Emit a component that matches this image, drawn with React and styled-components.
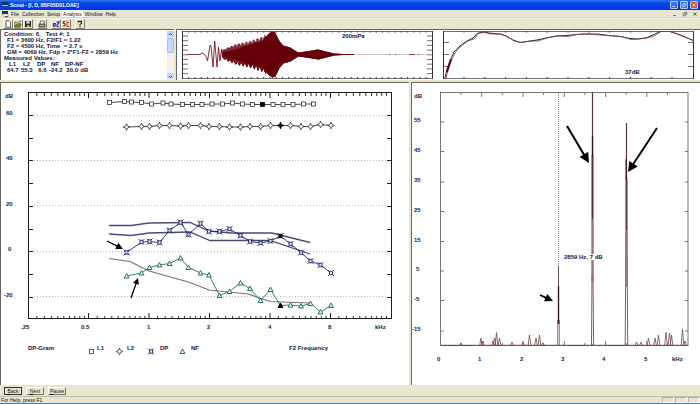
import React from "react";
import styled, { createGlobalStyle } from "styled-components";

const NAVY = "#16163e";
const MAROON = "#64000a";
const BEIGE = "#e8e5d0";
const DARK = "#66665f";

const GlobalStyle = createGlobalStyle`
  * { box-sizing: border-box; }
  body {
    margin: 0;
    background: ${BEIGE};
    font-family: "Liberation Sans", Arial, sans-serif;
    font-size: 5px;
    line-height: 6px;
    color: #111;
  }
  button { font: inherit; color: inherit; padding: 0; }
`;

const Window = styled.div`
  display: flex;
  flex-direction: column;
  min-height: 100vh;
  background: ${BEIGE};
`;

const TitleBar = styled.header`
  display: flex;
  align-items: center;
  gap: 1px;
  height: 10px;
  padding: 0 2px 0 1px;
  background: linear-gradient(#2c78ec, #0646e4 30%, #0438ea 80%, #0838c4);
  color: #fff;
`;

const Title = styled.h1`
  flex: 1;
  margin: 0;
  font-size: 5px;
  font-weight: bold;
`;

const Controls = styled.div`
  display: flex;
  gap: 2px;
`;

const ControlButton = styled.button`
  display: flex;
  align-items: center;
  justify-content: center;
  width: 8px;
  height: 8px;
  border: 1px solid ${(p) => (p.$plain ? "transparent" : "#b4c8f8")};
  border-radius: 1px;
  background: ${(p) => (p.$plain ? "transparent" : p.$danger ? "#dc5535" : "#3871ed")};
  color: ${(p) => (p.$plain ? "#333" : "#fff")};
`;

const MenuBar = styled.nav`
  display: flex;
  align-items: center;
  height: 8px;
  padding: 0 1px;
  border-bottom: 1px solid #d6d3c0;
`;

const MenuItems = styled.div`
  display: flex;
  flex: 1;
  gap: 1px;
  padding-left: 1px;
`;

const MenuButton = styled.button`
  height: 7px;
  padding: 0 1px;
  border: 0;
  background: ${(p) => (p.$active ? "#fff" : "transparent")};
`;

const ToolBar = styled.div`
  display: flex;
  align-items: center;
  height: 11px;
  padding: 0 3px;
  border-top: 1px solid #f5f3e8;
`;

const ToolGroup = styled.div`
  display: flex;
  margin-right: 4px;
`;

const ToolButton = styled.button`
  width: 10px;
  height: 10px;
  border: 1px solid;
  border-color: #fbfaf2 #85836f #85836f #fbfaf2;
  background: ${BEIGE};
`;

const Icon = styled.svg`
  display: block;
  width: 8px;
  height: 8px;
`;

const TopRow = styled.main`
  display: grid;
  grid-template-columns: 176fr 260fr 264fr;
  padding-bottom: 1px;
`;

const Panel = styled.section`
  min-width: 0;
  background: #fff;
  border-top: 1px solid ${DARK};
  border-left: ${(p) => (p.$open ? "0" : "1px")} solid ${DARK};
`;

const ReadoutPanel = styled(Panel)`
  display: flex;
  margin-right: 2px;
`;

const Readout = styled.div`
  flex: 1;
  padding: 1px 0 0 3px;
  font-size: 6px;
  font-weight: bold;
  line-height: 6px;
  color: ${NAVY};
  white-space: pre;
`;

const Line = styled.p`
  margin: 0;
  padding-left: ${(p) => (p.$indent ? "3px" : "0")};
`;

const Values = styled.table`
  margin-left: 3px;
  border-collapse: collapse;
  table-layout: fixed;
  width: 84px;
  th, td { padding: 0; text-align: left; font-weight: bold; }
  th { padding-left: 2px; }
`;

const ScrollBar = styled.div`
  display: flex;
  flex-direction: column;
  align-items: stretch;
  width: 7px;
  padding: 1px 0;
  background: #f2f1ea;
`;

const ScrollButton = styled.button`
  height: 6px;
  border: 0;
  border-radius: 1px;
  background: #c3d2fa;
  color: #33467a;
`;

const ScrollThumb = styled.div`
  height: 15px;
  margin: 1px 0 auto;
  border: 1px solid #a9bdf0;
  border-radius: 1px;
  background: #c7d6fc;
`;

const MainRow = styled.div`
  display: grid;
  grid-template-columns: 409fr 289fr;
  gap: 2px;
  padding-top: 1px;
`;

const Chart = styled.svg`
  display: block;
  width: 100%;
  height: auto;
  fill: none;
  text {
    font-size: 6px;
    font-weight: bold;
    fill: ${NAVY};
  }
`;

const Actions = styled.div`
  display: flex;
  align-items: center;
  gap: 4px;
  height: 11px;
  padding: 0 4px;
`;

const ActionButton = styled.button`
  width: 18px;
  height: 8px;
  border: 1px solid;
  border-color: ${(p) => (p.$focused ? "#333" : "#fff #77766a #77766a #fff")};
  background: ${BEIGE};
  line-height: 6px;
`;

const StatusBar = styled.footer`
  display: flex;
  justify-content: space-between;
  height: 7px;
  padding-left: 1px;
  border-top: 1px solid #bebdae;
`;

const StatusCells = styled.div`
  display: flex;
  gap: 1px;
`;

const StatusCell = styled.span`
  width: 12px;
  height: 6px;
  border: 1px solid;
  border-color: #b4b2a0 #fff #fff #b4b2a0;
`;

const DesktopEdge = styled.div`
  height: 2px;
  border-top: 1px solid #3e79d8;
  background: #cfe0f4;
`;

const pts = (list) => list.map((p) => p.join(",")).join(" ");

function WindowGlyph({ kind }) {
  return (
    <Icon viewBox="0 0 8 8" fill="none" stroke="currentColor">
      {kind === "min" && <path d="M2 6h3" />}
      {kind === "restore" && <path d="M3.5 3V1.5h3v3H5M1.5 3.5h3v3h-3z" strokeWidth=".7" />}
      {kind === "close" && <path d="M2 2l4 4M6 2L2 6" />}
    </Icon>
  );
}

function WindowControls({ plain }) {
  return (
    <Controls>
      <ControlButton $plain={plain} aria-label="Minimize"><WindowGlyph kind="min" /></ControlButton>
      <ControlButton $plain={plain} aria-label="Restore"><WindowGlyph kind="restore" /></ControlButton>
      <ControlButton $plain={plain} $danger aria-label="Close"><WindowGlyph kind="close" /></ControlButton>
    </Controls>
  );
}

const AppIcon = () => (
  <Icon viewBox="0 0 8 8">
    <rect x="1" y="1" width="6" height="3" fill="#16334d" />
    <rect x="1" y="4" width="6" height="1" fill="#8fb8cc" />
    <rect x="2" y="5" width="4" height="2" fill="#254664" />
  </Icon>
);

const DocIcon = () => (
  <Icon viewBox="0 0 8 8">
    <path d="M1 1h6v3H1z" fill="#16334d" />
    <path d="M1 4h6v3H3z" fill="#fff" stroke="#487086" strokeWidth=".5" />
    <path d="M4 6h3v1H4z" fill="#b33c28" />
  </Icon>
);

const toolGroups = [
  [
    ["New", <path d="M2 .8h3l1.5 1.5v5H2z" fill="#fff" stroke="#222" strokeWidth=".7" />],
    ["Open", <g><path d="M.7 7V2h2l1 1h2.5v4z" fill="#e7dc62" stroke="#332" strokeWidth=".6" /><path d="M.8 7l1.5-3h5L6 7z" fill="#8c8628" stroke="#332" strokeWidth=".5" /><path d="M5 1.3q1-1 2 .5" stroke="#222" fill="none" strokeWidth=".6" /></g>],
    ["Save", <g><path d="M1 1h6v6H1z" fill="#282a18" /><path d="M2.3 1.2h3.4v2.4H2.3z" fill="#ddd" /><path d="M3 5h2.5v2H3z" fill="#aaa" /></g>],
  ],
  [["Print", <g><path d="M1 4h6v3H1z" fill="#888" stroke="#222" strokeWidth=".7" /><path d="M2.5 1h3.7L5.7 4H2z" fill="#fff" stroke="#222" strokeWidth=".6" /><path d="M1.5 5.3h5" stroke="#ddd" strokeWidth=".6" /></g>]],
  [
    ["Calibrate", <g fill="none" strokeWidth="1"><path d="M3.2 3.6H1.3v2.7h1.9V3.2" stroke="#14148a" /><path d="M4.5 2h2v2H5v2.6h2M7 1v2" stroke="#1b24ae" /></g>],
    ["Collect", <g fill="none" strokeWidth="1"><path d="M3 1.5H1.2v2H3v2.4H1" stroke="#7d1212" /><path d="M7 2.5H5v4h2M4 1h1" stroke="#d02218" /></g>],
  ],
  [["Help", <g><path d="M2.3 2.8V1.4h3.2v2L4 4.4v1" stroke="#222" strokeWidth="1.1" fill="none" /><path d="M3.4 6.1h1.2v1.1H3.4z" fill="#222" /></g>]],
];

/* Pressure waveform */
const envelope = [[222, 4], [228, 7], [236, 10], [250, 13], [262, 17], [268, 20], [272, 23], [275, 22], [279, 14], [283, 9], [290, 7], [298, 2], [306, 3], [318, 5], [326, 3], [334, 1], [350, 0]];

const envAt = (x) => {
  const i = envelope.findIndex((p) => p[0] >= x);
  if (i <= 0) return envelope[0][1];
  const [x0, a] = envelope[i - 1];
  const [x1, b] = envelope[i];
  return a + ((b - a) * (x - x0)) / (x1 - x0);
};

const burst = [];
for (let i = 0; i < 128; i += 1) {
  const x = 222 + i;
  const wobble = x < 268 ? 0.75 + 0.3 * Math.abs(Math.sin(i * 2.3)) : 1;
  const a = envAt(x) * wobble;
  burst.push([x, (54.5 - a).toFixed(1)], [x + 0.5, (54.5 + a).toFixed(1)]);
}
const coreScale = (x) => (x < 240 ? 0.5 : x < 268 ? 0.8 : 1);
const core = [
  ...envelope.map(([x, a]) => [x, 54.5 - a * coreScale(x)]),
  ...[...envelope].reverse().map(([x, a]) => [x, 54.5 + a * coreScale(x)]),
];

const range = (n) => Array.from({ length: n }, (_, i) => i);

function Waveform() {
  return (
    <Chart viewBox="177 30 259 50" role="img" aria-label="Pressure waveform">
      <g stroke="#333" >
        <path d="M182.5 31v48M432.5 31v48" />
        <path d="M182 31.5h251M182 78.5h251" strokeWidth=".7" />
        {range(9).map((i) => (
          <path key={i} d={`M183 ${36 + i * 4.7}h5M427 ${36 + i * 4.7}h5`} strokeWidth=".7" />
        ))}
        {range(39).map((i) => (
          <path key={i} d={`M${188.7 + i * 6.25} 31v1.6M${188.7 + i * 6.25} 77v1.6`} />
        ))}
      </g>
      <path
        d="M187 54.5h13l2-1.5 2 1 2 2.5 1.5 4.5L210 45l1 1 2 21 1.7-26 2.3 26 1.5-20 1.5 14 1.5-12 1.5 8"
        stroke={MAROON}
        strokeWidth=".8"
      />
      <polygon points={pts(core)} fill={MAROON} />
      <polyline points={pts(burst)} stroke={MAROON} strokeWidth=".7" />
      <path d="M334 54.5h20" stroke={MAROON} />
      <path d="M354 54.5h78" stroke="#b59b9f" strokeWidth=".6" />
      <path d="M389 54.5h1M395 54.5h1M409 54.5h6M418 54.5h1" stroke={MAROON} strokeWidth=".7" />
      <text x="342" y="38">200mPa</text>
    </Chart>
  );
}

/* Probe response */
const response = [[445, 78], [447, 69], [450, 61], [454, 52], [460, 46], [467, 41], [473, 38], [477, 33.5], [483, 32], [489, 33], [500, 34], [506, 36], [513, 40], [520, 42.5], [530, 41], [537, 40], [546, 38], [556, 36], [567, 35.5], [576, 34.5], [584, 34], [598, 34], [608, 35.5], [620, 36.5], [630, 38.5], [637, 39], [646, 38], [653, 35], [660, 31.5], [670, 31.5], [682, 35.5], [693, 40.5]];

function Response() {
  return (
    <Chart viewBox="436 30 264 50" role="img" aria-label="Probe response">
      <g stroke="#333">
        <path d="M443.5 31v48M693.5 31v48" />
        <path d="M443 31.5h251M443 78.5h251" strokeWidth=".7" />
        {[42.5, 54.5, 66.5].map((y) => (
          <path key={y} d={`M444 ${y}h5M688 ${y}h5`} strokeWidth=".7" />
        ))}
        {range(11).map((i) => (
          <path key={i} d={`M${464 + i * 20.8} 31v1.6M${464 + i * 20.8} 77v1.6`} />
        ))}
      </g>
      <polyline points={pts(response)} stroke="#1c2350" />
      <polyline points={pts(response.map(([x, y], i) => [x + 1, y + (i % 3 === 0 ? 1 : 0)]))} stroke="#8b4246" strokeWidth=".8" />
      <path d="M447 72l4-13" stroke={MAROON} strokeWidth="2" />
      <text x="625" y="74">37dB</text>
    </Chart>
  );
}

/* DP-Gram data */
const xs = [126.5, 141.5, 149.5, 159.5, 169.5, 180.5, 188.5, 200.5, 209, 219.5, 229.5, 240.5, 250, 260.5, 270.5, 280.5, 290.5, 301, 310.5, 320.5, 331];
const withX = (ys) => ys.map((y, i) => [xs[i], y]);
const l1 = [[109.5, 102.5], [124.5, 101.5], [131.5, 102], [141.5, 102.5], [151.5, 104], [163, 103], [171, 104], [182.5, 104.5], [192.5, 104.5], [202, 104.5], [212, 104], [222.5, 104], [232.5, 103], [242.5, 104], [252.5, 104.5], [262.5, 104.5], [273, 104.5], [283, 104.5], [293, 104.5], [303.5, 104], [313.5, 104]];
const l2 = withX([127, 126.5, 126.5, 125.5, 125.5, 126, 125.5, 125.5, 126.5, 126.5, 127, 127, 126.5, 126.5, 125.5, 125.5, 125.5, 126.5, 126.5, 124.5, 125.5]);
const dp = withX([252.5, 242, 241.5, 242.5, 230.5, 222.5, 234.5, 223.5, 231.5, 231.5, 229, 235.5, 241.5, 243, 241, 236, 244, 252.5, 261, 265, 273]);
const nf = withX([276, 273, 267.5, 265, 263.5, 258, 267.5, 273, 275, 295.5, 291.5, 283, 288.5, 300.5, 289.5, 305.5, 305, 306, 303.5, 312, 305.5]);

const colors = { square: "#333", star: "#333", cross: "#20246e", triangle: "#24774c" };

function Marker({ kind, x, y, selected }) {
  const color = selected ? "#000" : colors[kind];
  const fill = selected ? "#000" : "#fff";
  const place = `translate(${x} ${y})`;
  if (kind === "square") return <rect transform={place} x="-2" y="-2" width="4" height="4" fill={fill} stroke={color} strokeWidth=".8" />;
  if (kind === "star") return <path transform={place} d="M0-3.4L1-1 3.4 0 1 1 0 3.4-1 1-3.4 0-1-1z" fill={fill} stroke={color} strokeWidth=".8" />;
  if (kind === "triangle") return <path transform={place} d="M0-2.5L2.4 2h-4.8z" fill={selected ? "#000" : "#e9f8ed"} stroke={color} />;
  return (
    <g transform={place} stroke={color} strokeWidth=".9">
      <path d="M-1.5-1.7h3v3.4h-3z" fill={selected ? "#000" : "#dfe3fa"} />
      <path d="M-3-3l1.5 1.5M3-3L1.5-1.5M-3 3l1.5-1.5M3 3L1.5 1.5" />
    </g>
  );
}

function Series({ kind, data, selected }) {
  return (
    <g>
      <polyline points={pts(data)} stroke={colors[kind]} strokeWidth=".9" />
      {data.map(([x, y], i) => (
        <Marker key={i} kind={kind} x={x} y={y} selected={i === selected} />
      ))}
    </g>
  );
}

function Arrow({ from, to, size = 6, width = 1.3 }) {
  const angle = (Math.atan2(to[1] - from[1], to[0] - from[0]) * 180) / Math.PI;
  const length = Math.hypot(to[0] - from[0], to[1] - from[1]);
  return (
    <g transform={`translate(${from[0]} ${from[1]}) rotate(${angle})`}>
      <path d={`M0 0H${length - size + 1}`} stroke="#000" strokeWidth={width} />
      <path d={`M${length} 0l${-size} ${-size / 2}v${size}z`} fill="#000" />
    </g>
  );
}

const majorX = [88.5, 149, 209.5, 270, 330.5];
const minorX = range(6).flatMap((o) => range(9).map((k) => 28.5 + 60.4 * (o + Math.log2(1.1 + k / 10)))).filter((x) => x < 390);
const dpLabels = [[5, 98, "dB"], [6, 115, "60"], [6, 160, "40"], [6, 206, "20"], [8, 251, "0"], [4, 297, "-20"], [21, 329, ".25"], [81, 329, "0.5"], [147, 329, "1"], [207, 329, "2"], [268, 329, "4"], [328, 329, "8"], [375, 329, "kHz"], [28, 350, "DP-Gram"], [97, 350, "L1"], [127, 350, "L2"], [160, 350, "DP"], [191, 350, "NF"], [289, 350, "F2 Frequency"]];

function DpGram() {
  return (
    <Chart viewBox="1 83 408 302" role="img" aria-label="DP-Gram">
      <g stroke="#b9b9bd" strokeDasharray="1 2">
        {[115.5, 160.5, 205.5, 251.5, 296.5].map((y) => <path key={y} d={`M34 ${y}h353`} />)}
      </g>
      <g stroke="#1c1c1c">
        <rect x="28.5" y="92.5" width="363" height="226" />
        {range(9).map((i) => {
          const y = Math.round(115 + i * 22.7) + 0.5;
          return <path key={i} d={`M29 ${y}h4M387 ${y}h4`} />;
        })}
        {majorX.map((x) => <path key={x} d={`M${x} 93v5M${x} 313v5`} />)}
        {minorX.map((x) => <path key={x} d={`M${x} 93v3M${x} 316v2`} strokeWidth=".9" />)}
      </g>
      <g stroke="#4b4b78" strokeWidth="1.3">
        <polyline points="109,225.5 131,225.5 149,223 190,222.5 209,231 231,233 272,233 310,242.5" />
        <polyline points="109,234 131,235.5 149,233 190,232 210,240.5 270,240.5 310,254" />
      </g>
      <polyline points="109,258.5 130,261.5 149,271 190,282.5 209,290 248,294 270,301.5 310,303" stroke="#7d7070" strokeWidth="1.2" />
      <Series kind="square" data={l1} selected={15} />
      <Series kind="star" data={l2} selected={15} />
      <Series kind="triangle" data={nf} selected={15} />
      <Series kind="cross" data={dp} selected={15} />
      <Arrow from={[107, 241]} to={[123, 249]} size={7} />
      <Arrow from={[131, 298]} to={[138, 278]} size={6} />
      <Marker kind="square" x={91.5} y={351.5} />
      <Marker kind="star" x={119.5} y={351.5} />
      <Marker kind="cross" x={151} y={351.5} />
      <Marker kind="triangle" x={182.5} y={351.5} />
      {dpLabels.map(([x, y, label]) => <text key={label} x={x} y={y}>{label}</text>)}
    </Chart>
  );
}

/* Spectrum data */
const noise = [[461, 343], [481, 338], [483, 341], [493, 341], [494.5, 338], [496.5, 332.5], [499.5, 338], [512, 342], [523, 342], [529.5, 335], [536, 338], [539.5, 335], [543, 343], [636.5, 342], [641, 342], [648.5, 338], [655, 338], [658.5, 335], [666, 332.5], [669.5, 333], [671.5, 335], [682.5, 329], [685, 341]];
const spectrumY = [122, 151.5, 182, 211.5, 241.5, 271, 300.5, 331];

function Spectrum() {
  return (
    <Chart viewBox="412 83 288 302" role="img" aria-label="Spectrum">
      <g stroke="#666" strokeWidth=".9">
        <rect x="440.5" y="92.5" width="247.5" height="253" />
        {spectrumY.map((y) => <path key={y} d={`M441 ${y}h3M685 ${y}h3`} />)}
        {range(11).map((i) => {
          const x = 461 + i * 20.65;
          const size = i % 2 ? 4 : 2;
          return <path key={i} d={`M${x} 93v${size}M${x} 345v${-size}`} />;
        })}
      </g>
      <path d="M441 345.3h247" stroke="#754248" />
      {noise.map(([x, y]) => (
        <path key={x} d={`M${x - 1.3} 345L${x} ${y}l1.3 ${345 - y}`} stroke="#79444b" strokeWidth=".8" />
      ))}
      <path d="M558.5 93v173" stroke="#5f978b" strokeDasharray="1 1" />
      <path d="M557.7 345v-25h1.6v25" stroke="#7b6453" strokeWidth=".9" />
      <path d="M558.5 324v-38" stroke="#3c1715" strokeWidth="1.4" />
      <path d="M558.5 286v-20" stroke="#79535a" />
      <path d="M591.5 345l.5-70.5h1l.6 70.5z" stroke="#704950" strokeWidth=".9" />
      <path d="M592.5 282V155" stroke="#93747a" strokeWidth="2.4" />
      <path d="M592.5 219V93" stroke="#5c3038" strokeWidth="1.2" />
      <path d="M592.5 156v-20" stroke="#331015" strokeWidth="1.3" />
      <path d="M625.2 345l.8-114h1l.7 114" stroke="#704f52" strokeWidth=".9" />
      <path d="M626.5 287V178" stroke="#93787b" strokeWidth="2.3" />
      <path d="M626.5 230V123" stroke="#5c333b" strokeWidth="1.2" />
      <path d="M626.2 179v-20" stroke="#461d25" strokeWidth="1.4" />
      <rect x="564" y="254" width="40" height="6" fill="#fff" />
      <Arrow from={[567, 126]} to={[589, 163]} size={10} width={2} />
      <Arrow from={[657, 128]} to={[628, 172]} size={10} width={2} />
      <Arrow from={[540, 295]} to={[553, 301]} size={8} width={1.8} />
      {[55, 45, 35, 25, 15, 5, -5, -15].map((v, i) => (
        <text key={v} x={v === 5 ? 416 : v === -15 ? 412 : 414} y={Math.round(spectrumY[i])}>{v}</text>
      ))}
      <text x="414" y="98">dB</text>
      {range(6).map((i) => <text key={i} x={437 + Math.round(i * 41.3)} y="361">{i}</text>)}
      <text x="672" y="361">kHz</text>
      <text x="564" y="259">2859 Hz, 7 dB</text>
    </Chart>
  );
}

export default function App() {
  return (
    <>
      <GlobalStyle />
      <Window>
        <TitleBar>
          <AppIcon />
          <Title>Scout - [I, D, 0BF05D01.OAE]</Title>
          <WindowControls />
        </TitleBar>
        <MenuBar>
          <DocIcon />
          <MenuItems>
            {["File", "Collection", "Setup", "Analysis", "Window", "Help"].map((name) => (
              <MenuButton key={name} $active={name === "Analysis"}>{name}</MenuButton>
            ))}
          </MenuItems>
          <WindowControls plain />
        </MenuBar>
        <ToolBar>
          {toolGroups.map((group) => (
            <ToolGroup key={group[0][0]}>
              {group.map(([name, art]) => (
                <ToolButton key={name} aria-label={name}>
                  <Icon viewBox="0 0 8 8">{art}</Icon>
                </ToolButton>
              ))}
            </ToolGroup>
          ))}
        </ToolBar>
        <TopRow>
          <ReadoutPanel>
            <Readout>
              <Line>Condition: 6,   Test #: 1</Line>
              <Line $indent>F1 = 3600 Hz, F2/F1 = 1.22</Line>
              <Line $indent>F2 = 4500 Hz, Time  = 2.7 s</Line>
              <Line $indent>GM = 4069 Hz, Fdp = 2*F1-F2 = 2859 Hz</Line>
              <Line>Measured Values:</Line>
              <Values>
                <thead>
                  <tr><th>L1</th><th>L2</th><th>DP</th><th>NF</th><th>DP-NF</th><th aria-label="Unit" /></tr>
                </thead>
                <tbody>
                  <tr><td>64.7</td><td>55.3</td><td>  6.6</td><td>-24.2</td><td>  30.0</td><td>  dB</td></tr>
                </tbody>
              </Values>
            </Readout>
            <ScrollBar>
              <ScrollButton aria-label="Scroll up">
                <Icon viewBox="0 0 8 8" fill="none" stroke="currentColor"><path d="M2 4l1.5-1.5L5 4" /></Icon>
              </ScrollButton>
              <ScrollThumb />
              <ScrollButton aria-label="Scroll down">
                <Icon viewBox="0 0 8 8" fill="none" stroke="currentColor"><path d="M2 3l1.5 1.5L5 3" /></Icon>
              </ScrollButton>
            </ScrollBar>
          </ReadoutPanel>
          <Panel><Waveform /></Panel>
          <Panel $open><Response /></Panel>
        </TopRow>
        <MainRow>
          <Panel><DpGram /></Panel>
          <Panel><Spectrum /></Panel>
        </MainRow>
        <Actions>
          <ActionButton $focused><u>B</u>ack</ActionButton>
          <ActionButton><u>N</u>ext</ActionButton>
          <ActionButton><u>P</u>ause</ActionButton>
        </Actions>
        <StatusBar>
          <span>For Help, press F1</span>
          <StatusCells><StatusCell /><StatusCell /><StatusCell /></StatusCells>
        </StatusBar>
        <DesktopEdge />
      </Window>
    </>
  );
}
